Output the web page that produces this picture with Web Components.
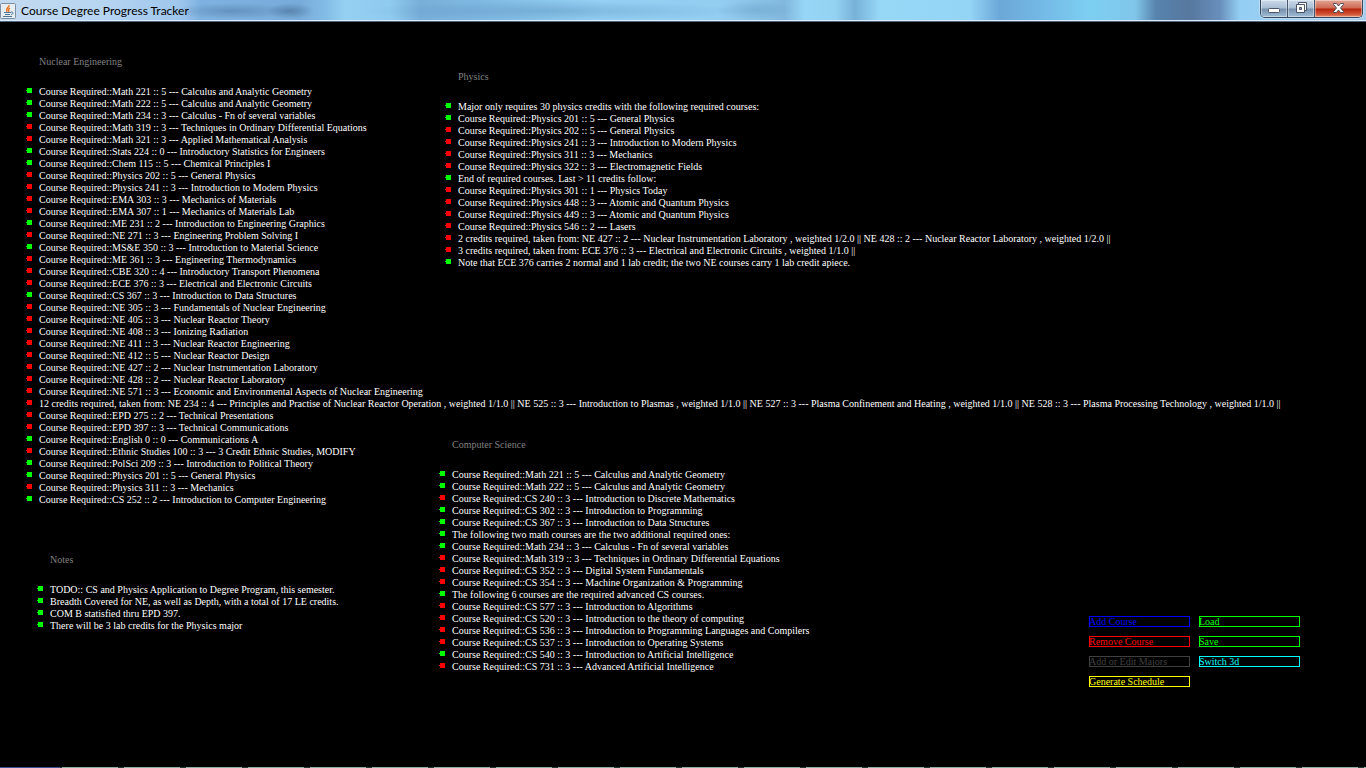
<!DOCTYPE html>
<html lang="en">
<head>
<meta charset="utf-8">
<title>Course Degree Progress Tracker</title>
<style>
html, body { margin: 0; height: 100%; background: #000; }
body { font: 10px/12px "Liberation Serif", serif; color: #fff; }
</style>
</head>
<body>
<tracker-app></tracker-app>
<script>
function define(name, html, setup) {
  const template = document.createElement("template");
  template.innerHTML = html;
  customElements.define(name, class extends HTMLElement {
    constructor() {
      super();
      this.attachShadow({ mode: "open" }).append(template.content.cloneNode(true));
    }
    connectedCallback() { if (setup) setup(this, this.shadowRoot); }
  });
}

define("window-bar", `
<style>
:host { display: flex; align-items: flex-start; height: 22px; box-sizing: border-box; overflow: hidden;
  border-bottom: 1px solid #52657c; box-shadow: inset 0 -1px #dcecf8; color: #000;
  background:
    radial-gradient(ellipse 60px 8px at 232px 11px, #3f658f66, transparent),
    radial-gradient(ellipse 24px 8px at 290px 11px, #35587f77, transparent),
    radial-gradient(ellipse 190px 10px at 550px 11px, #4f81b055, transparent),
    radial-gradient(ellipse 40px 9px at 755px 10px, #4f81b044, transparent),
    linear-gradient(90deg, #c3daf0 0, #b7d5f1 100px, #9ec6ec 180px, #7fb2e0 200px, #78abd9 300px, #82bce6 325px, #95d0f2 345px, #8fcbef 390px, #78afd9 420px, #7fb9e2 480px, #94d0f3 600px, #93cdf0 720px, #82b8dd 785px, #97d6f6 805px, #94d2f2 835px, #77b1d8 855px, #97d8f7 880px, #94d4f5 970px, #6ba7d8 1000px, #75bde8 1050px, #7dcff2 1090px, #80c6ea 1135px, #5783ac 1156px, #57789f 1190px, #688fbb 1220px, #94cef3 1240px, #a9cdeb 100%); }
.icon { flex: none; width: 16px; height: 16px; margin: 3px 5px 0 0; }
h1 { flex: 1; margin: 3px 0 0; font: 12px/16px Lato, sans-serif; white-space: nowrap; }
.controls { display: flex; margin-right: 3px; height: 18px; box-sizing: border-box; border: 1px solid #33465b; border-top: 0; border-radius: 0 0 5px 5px; overflow: hidden; box-shadow: 0 0 0 1px #d9ebfa88; }
button { display: grid; place-items: center; padding: 0; margin: 0; height: 17px; border: 0; border-right: 1px solid #43566d; box-shadow: inset 0 0 0 1px #ffffff66; background: linear-gradient(#cbdbea, #a9bed3 8px, #7790ab 9px, #a0bdd6); }
.min { width: 27px; } .max { width: 27px; }
.close { width: 47px; border: 0; background: linear-gradient(#e3a494, #cf6b54 8px, #b8230c 9px, #cf5236 14px, #e98a6b); }
svg { display: block; }
</style>
<svg class="icon" viewBox="0 0 16 16" aria-hidden="true">
  <rect x=".5" y=".5" width="15" height="15" rx="1" fill="#e8edf2" stroke="#7c8ea2"/>
  <path d="M9 2C10 4 5 5 7 9M10 5C8 6 8 7 9 9" fill="none" stroke="#e9701c" stroke-width="1.3"/>
  <path d="M4 9.500h7M5 11.500h5M3 13.500h9M11 9c3-.5 2.500 2.500 0 2.500" fill="none" stroke="#4c7697" stroke-width="1"/>
</svg>
<h1><slot></slot></h1>
<div class="controls">
  <button class="min" aria-label="Minimize"><svg width="13" height="17"><rect x=".5" y="8.500" width="11" height="4" rx="1" fill="#fff" stroke="#4c5568"/></svg></button>
  <button class="max" aria-label="Restore"><svg width="13" height="17"><path d="M3.500 2.500h8v8h-8z" fill="#fff" stroke="#4c5568"/><path d="M1.500 4.500h8v8h-8z" fill="#fff" stroke="#4c5568"/><path d="M4.500 7.500h2v2h-2z" fill="#8ea4bd" stroke="#4c5568"/></svg></button>
  <button class="close" aria-label="Close"><svg width="13" height="17"><path d="M1.500 3.500h3l2 2.500 2-2.500h3v1L8.500 8l3 3.500v1h-3l-2-2.500-2 2.500h-3v-1l3-3.500-3-3.500z" fill="#fff" stroke="#4c4a5c"/></svg></button>
</div>`);

define("course-line", `
<style>
:host { display: flex; align-items: flex-start; gap: 7px; height: 12px; white-space: nowrap; }
svg { flex: none; display: block; margin-top: 2px; fill: #f00; }
:host([done]) svg { fill: #0f0; }
</style>
<svg width="6" height="5" aria-hidden="true"><path d="M0 2h1V0h5v5H1V3H0z"/></svg>
<span><slot></slot></span>`);

define("major-list", `
<style>
:host { display: block; }
h2 { margin: 0 0 18px 13px; font: inherit; color: #808080; }
</style>
<h2></h2>
<div role="list"><slot></slot></div>`, (host, root) => {
  root.querySelector("h2").textContent = host.getAttribute("heading");
});

define("tool-button", `
<style>
:host { display: block; }
button { display: block; width: 100%; height: 11px; box-sizing: border-box; margin: 0; padding: 0; border: 1px solid; border-radius: 0; background: none; color: inherit; font: inherit; line-height: 9px; text-align: left; text-indent: -1px; white-space: nowrap; }
</style>
<button><slot></slot></button>`);

/* A leading "+" marks a completed requirement, "-" one still open. */
const majors = {
ne: `+Course Required::Math 221 :: 5 --- Calculus and Analytic Geometry
+Course Required::Math 222 :: 5 --- Calculus and Analytic Geometry
+Course Required::Math 234 :: 3 --- Calculus - Fn of several variables
-Course Required::Math 319 :: 3 --- Techniques in Ordinary Differential Equations
-Course Required::Math 321 :: 3 --- Applied Mathematical Analysis
+Course Required::Stats 224 :: 0 --- Introductory Statistics for Engineers
+Course Required::Chem 115 :: 5 --- Chemical Principles I
-Course Required::Physics 202 :: 5 --- General Physics
-Course Required::Physics 241 :: 3 --- Introduction to Modern Physics
-Course Required::EMA 303 :: 3 --- Mechanics of Materials
-Course Required::EMA 307 :: 1 --- Mechanics of Materials Lab
+Course Required::ME 231 :: 2 --- Introduction to Engineering Graphics
-Course Required::NE 271 :: 3 --- Engineering Problem Solving I
+Course Required::MS&E 350 :: 3 --- Introduction to Material Science
-Course Required::ME 361 :: 3 --- Engineering Thermodynamics
-Course Required::CBE 320 :: 4 --- Introductory Transport Phenomena
-Course Required::ECE 376 :: 3 --- Electrical and Electronic Circuits
+Course Required::CS 367 :: 3 --- Introduction to Data Structures
-Course Required::NE 305 :: 3 --- Fundamentals of Nuclear Engineering
-Course Required::NE 405 :: 3 --- Nuclear Reactor Theory
-Course Required::NE 408 :: 3 --- Ionizing Radiation
-Course Required::NE 411 :: 3 --- Nuclear Reactor Engineering
-Course Required::NE 412 :: 5 --- Nuclear Reactor Design
-Course Required::NE 427 :: 2 --- Nuclear Instrumentation Laboratory
-Course Required::NE 428 :: 2 --- Nuclear Reactor Laboratory
-Course Required::NE 571 :: 3 --- Economic and Environmental Aspects of Nuclear Engineering
-12 credits required, taken from: NE 234 :: 4 --- Principles and Practise of Nuclear Reactor Operation , weighted 1/1.0 || NE 525 :: 3 --- Introduction to Plasmas , weighted 1/1.0 || NE 527 :: 3 --- Plasma Confinement and Heating , weighted 1/1.0 || NE 528 :: 3 --- Plasma Processing Technology , weighted 1/1.0 ||
-Course Required::EPD 275 :: 2 --- Technical Presentations
-Course Required::EPD 397 :: 3 --- Technical Communications
+Course Required::English 0 :: 0 --- Communications A
-Course Required::Ethnic Studies 100 :: 3 --- 3 Credit Ethnic Studies, MODIFY
+Course Required::PolSci 209 :: 3 --- Introduction to Political Theory
+Course Required::Physics 201 :: 5 --- General Physics
-Course Required::Physics 311 :: 3 --- Mechanics
+Course Required::CS 252 :: 2 --- Introduction to Computer Engineering`,
notes: `+TODO:: CS and Physics Application to Degree Program, this semester.
+Breadth Covered for NE, as well as Depth, with a total of 17 LE credits.
+COM B statisfied thru EPD 397.
+There will be 3 lab credits for the Physics major`,
physics: `+Major only requires 30 physics credits with the following required courses:
+Course Required::Physics 201 :: 5 --- General Physics
-Course Required::Physics 202 :: 5 --- General Physics
-Course Required::Physics 241 :: 3 --- Introduction to Modern Physics
-Course Required::Physics 311 :: 3 --- Mechanics
-Course Required::Physics 322 :: 3 --- Electromagnetic Fields
+End of required courses. Last > 11 credits follow:
-Course Required::Physics 301 :: 1 --- Physics Today
-Course Required::Physics 448 :: 3 --- Atomic and Quantum Physics
-Course Required::Physics 449 :: 3 --- Atomic and Quantum Physics
-Course Required::Physics 546 :: 2 --- Lasers
-2 credits required, taken from: NE 427 :: 2 --- Nuclear Instrumentation Laboratory , weighted 1/2.0 || NE 428 :: 2 --- Nuclear Reactor Laboratory , weighted 1/2.0 ||
-3 credits required, taken from: ECE 376 :: 3 --- Electrical and Electronic Circuits , weighted 1/1.0 ||
+Note that ECE 376 carries 2 normal and 1 lab credit; the two NE courses carry 1 lab credit apiece.`,
cs: `+Course Required::Math 221 :: 5 --- Calculus and Analytic Geometry
+Course Required::Math 222 :: 5 --- Calculus and Analytic Geometry
-Course Required::CS 240 :: 3 --- Introduction to Discrete Mathematics
+Course Required::CS 302 :: 3 --- Introduction to Programming
+Course Required::CS 367 :: 3 --- Introduction to Data Structures
+The following two math courses are the two additional required ones:
+Course Required::Math 234 :: 3 --- Calculus - Fn of several variables
-Course Required::Math 319 :: 3 --- Techniques in Ordinary Differential Equations
-Course Required::CS 352 :: 3 --- Digital System Fundamentals
-Course Required::CS 354 :: 3 --- Machine Organization & Programming
+The following 6 courses are the required advanced CS courses.
-Course Required::CS 577 :: 3 --- Introduction to Algorithms
-Course Required::CS 520 :: 3 --- Introduction to the theory of computing
-Course Required::CS 536 :: 3 --- Introduction to Programming Languages and Compilers
-Course Required::CS 537 :: 3 --- Introduction to Operating Systems
+Course Required::CS 540 :: 3 --- Introduction to Artificial Intelligence
-Course Required::CS 731 :: 3 --- Advanced Artificial Intelligence`
};

define("tracker-app", `
<style>
:host { display: flex; flex-direction: column; min-height: 100vh; box-sizing: border-box; overflow-x: hidden; }
main { flex: 1; display: grid; grid-template-columns: 413px 1fr auto; padding: 34px 66px 0 26px; }
.column { min-width: 0; }
#notes { margin: 48px 0 0 11px; }
#physics { margin: 15px 0 0 6px; }
#cs { margin-top: 170px; }
nav { display: grid; grid-template-columns: 101px 101px; gap: 9px; align-self: start; margin-top: 560px; }
nav div { display: grid; gap: 9px; align-content: start; }
footer { height: 1px; background: linear-gradient(90deg, #3c5590 60px, transparent 60px), repeating-linear-gradient(90deg, #8fb0a8 0 56px, #20382f 56px 62px); }
</style>
<window-bar>Course Degree Progress Tracker</window-bar>
<main>
  <div class="column">
    <major-list id="ne" heading="Nuclear Engineering"></major-list>
    <major-list id="notes" heading="Notes"></major-list>
  </div>
  <div class="column">
    <major-list id="physics" heading="Physics"></major-list>
    <major-list id="cs" heading="Computer Science"></major-list>
  </div>
  <nav aria-label="Actions">
    <div>
      <tool-button style="color:#00f">Add Course</tool-button>
      <tool-button style="color:#f00">Remove Course</tool-button>
      <tool-button style="color:#404040">Add or Edit Majors</tool-button>
      <tool-button style="color:#ff0">Generate Schedule</tool-button>
    </div>
    <div>
      <tool-button style="color:#0f0">Load</tool-button>
      <tool-button style="color:#0f0">Save</tool-button>
      <tool-button style="color:#0ff">Switch 3d</tool-button>
    </div>
  </nav>
</main>
<footer></footer>`, (host, root) => {
  for (const [id, text] of Object.entries(majors)) {
    for (const row of text.split("\n")) {
      const line = document.createElement("course-line");
      line.setAttribute("role", "listitem");
      line.toggleAttribute("done", row[0] === "+");
      line.textContent = row.slice(1);
      root.getElementById(id).append(line);
    }
  }
});
</script>
</body>
</html>
